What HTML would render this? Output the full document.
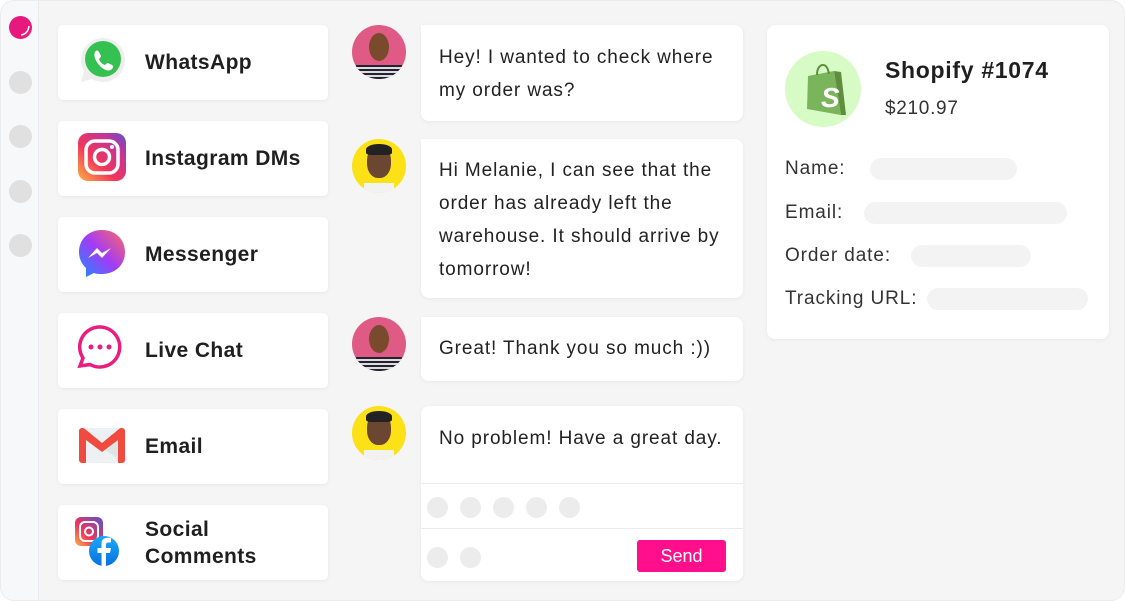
<!DOCTYPE html>
<html><head><style>
*{margin:0;padding:0;box-sizing:border-box}
body{width:1125px;height:601px;background:#fff;font-family:"Liberation Sans",sans-serif;color:#1f1f1f;position:relative;overflow:hidden}
.frame{position:absolute;left:0;top:0;width:1125px;height:601px;background:#f5f5f5;border-radius:14px;border:1px solid #ececec;overflow:hidden}
.side{position:absolute;left:0;top:0;width:38px;height:601px;background:#f7f8fa;border-right:1px solid #e6ebf0}
.dot{position:absolute;left:8px;width:23px;height:23px;border-radius:50%;background:#e0e0e0}
.card{position:absolute;left:57px;width:270px;height:75px;background:#fff;border-radius:5px;box-shadow:0 1px 4px rgba(0,0,0,.05)}
.card .lbl{position:absolute;left:87px;top:0;height:75px;display:flex;align-items:center;font-size:21px;font-weight:bold;line-height:27px;letter-spacing:0.4px}
.card svg{position:absolute}
.av{position:absolute;left:351px;width:54px;height:54px;border-radius:50%;overflow:hidden}
.b{position:absolute;left:420px;width:322px;background:#fff;border-radius:0 8px 8px 8px;box-shadow:0 1px 5px rgba(0,0,0,.06);font-size:19px;line-height:33px;padding:17px 10px 0 18px;color:#222;letter-spacing:0.9px}
.g{position:absolute;width:21px;height:21px;border-radius:50%;background:#ececec}
.right{position:absolute;left:766px;top:24px;width:342px;height:314px;background:#fff;border-radius:8px;box-shadow:0 1px 5px rgba(0,0,0,.06)}
.fl{position:absolute;left:18px;font-size:19px;color:#333;letter-spacing:0.9px}
.pill{position:absolute;height:22px;border-radius:11px;background:#f3f3f3}
</style></head><body><div class="frame">
<div class="side">
<div style="position:absolute;left:8px;top:15px;width:23px;height:23px;border-radius:50%;background:#e8197c"></div>
<svg style="position:absolute;left:8px;top:15px" width="23" height="23"><path d="M20 10 Q19 18 12 19" stroke="#fff" stroke-width="1.5" fill="none"/></svg>
<div class="dot" style="top:70px"></div><div class="dot" style="top:124px"></div><div class="dot" style="top:179px"></div><div class="dot" style="top:233px"></div>
</div>

<div class="card" style="top:24px"><svg style="left:20px;top:10px" width="50" height="50" viewBox="0 0 50 50"><path d="M25 3a22 22 0 0 1 0 44a22 22 0 0 1-11-3L3 47l3-11A22 22 0 0 1 25 3z" fill="#eee"/><circle cx="25" cy="24" r="18" fill="#35c152"/><path d="M17 17c1-2 3-2 4 0l2 4c0 1-1 2-2 3 1 3 3 5 6 6 1-1 2-2 3-2l4 2c2 1 1 3 0 4-3 3-8 1-12-3s-7-10-5-14z" fill="#fff"/></svg><div class="lbl">WhatsApp</div></div>

<div class="card" style="top:120px"><svg style="left:20px;top:12px" width="48" height="48" viewBox="0 0 48 48"><defs><linearGradient id="ig" x1="0" y1="1" x2="1" y2="0"><stop offset="0" stop-color="#fdb343"/><stop offset=".4" stop-color="#f1355b"/><stop offset=".75" stop-color="#c43596"/><stop offset="1" stop-color="#5a4fd0"/></linearGradient></defs><rect width="48" height="48" rx="10" fill="url(#ig)"/><rect x="8" y="8" width="32" height="32" rx="9" fill="none" stroke="#fff" stroke-width="3.5"/><circle cx="24" cy="24" r="7.5" fill="none" stroke="#fff" stroke-width="3.5"/><circle cx="34" cy="14" r="2" fill="#fff"/></svg><div class="lbl">Instagram DMs</div></div>

<div class="card" style="top:216px"><svg style="left:20px;top:12px" width="48" height="50" viewBox="0 0 48 50"><defs><linearGradient id="ms" x1="0" y1="1" x2="1" y2="0"><stop offset="0" stop-color="#1b8cff"/><stop offset=".5" stop-color="#a33bf5"/><stop offset="1" stop-color="#ff6c60"/></linearGradient></defs><path d="M24 1C11 1 1 10 1 23c0 7 3 12 7 16v9l8-4c2 1 5 1 8 1 13 0 23-9 23-22S37 1 24 1z" fill="url(#ms)"/><path d="M10 29l9-10 5 5 9-5-9 10-5-5z" fill="#fff"/></svg><div class="lbl">Messenger</div></div>

<div class="card" style="top:312px"><svg style="left:17px;top:10px" width="50" height="52" viewBox="0 0 50 52"><path d="M25 4a20 20 0 1 1-10 37.5L5 43l3-8A20 20 0 0 1 25 4z" fill="none" stroke="#ea1c7f" stroke-width="3.5"/><circle cx="16" cy="24" r="2.5" fill="#ea1c7f"/><circle cx="25" cy="24" r="2.5" fill="#ea1c7f"/><circle cx="34" cy="24" r="2.5" fill="#ea1c7f"/></svg><div class="lbl">Live Chat</div></div>

<div class="card" style="top:408px"><svg style="left:21px;top:19px" width="46" height="35" viewBox="0 0 46 35"><rect width="46" height="35" rx="3" fill="#eef1f3"/><path d="M23 20L46 35V5z" fill="#dfe4e7"/><path d="M0 3v29a3 3 0 0 0 3 3h4V12l16 12 16-12v23h4a3 3 0 0 0 3-3V3c0-3-4-4-6-2L23 15 6 1C4-1 0 0 0 3z" fill="#f14a3f"/></svg><div class="lbl">Email</div></div>

<div class="card" style="top:504px"><svg style="left:17px;top:12px" width="48" height="50" viewBox="0 0 48 50"><defs><linearGradient id="ig2" x1="0" y1="1" x2="1" y2="0"><stop offset="0" stop-color="#fdb343"/><stop offset=".4" stop-color="#f1355b"/><stop offset="1" stop-color="#5a4fd0"/></linearGradient><linearGradient id="fb" x1="0" y1="1" x2="0" y2="0"><stop offset="0" stop-color="#0a6fe0"/><stop offset="1" stop-color="#19aaf8"/></linearGradient></defs><rect x="0" y="0" width="28" height="29" rx="6" fill="url(#ig2)"/><rect x="5" y="5" width="18" height="19" rx="5" fill="none" stroke="#fff" stroke-width="2"/><circle cx="14" cy="14.5" r="4" fill="none" stroke="#fff" stroke-width="2"/><circle cx="29" cy="34" r="15" fill="url(#fb)"/><path d="M31 49V36h4l1-5h-5v-3c0-1.5.5-2.5 2.5-2.5H36v-4.5c-1 0-2-.2-3.5-.2-3.5 0-6 2-6 6V31h-4v5h4v13z" fill="#fff"/></svg><div class="lbl">Social<br>Comments</div></div>

<div class="av" style="top:24px;background:#e05a86"><div style="position:absolute;left:17px;top:8px;width:20px;height:28px;border-radius:50%;background:#7a4a2c"></div><div style="position:absolute;left:4px;top:40px;width:46px;height:14px;background:repeating-linear-gradient(180deg,#223 0 2px,#ddd 2px 4px)"></div></div>
<div class="av" style="top:138px;background:#fce117"><div style="position:absolute;left:15px;top:7px;width:24px;height:32px;border-radius:45%;background:#6b4630"></div><div style="position:absolute;left:14px;top:5px;width:26px;height:11px;border-radius:50% 50% 20% 20%;background:#222"></div><div style="position:absolute;left:12px;top:44px;width:30px;height:10px;background:#f2f2f2"></div></div>
<div class="av" style="top:316px;background:#e05a86"><div style="position:absolute;left:17px;top:8px;width:20px;height:28px;border-radius:50%;background:#7a4a2c"></div><div style="position:absolute;left:4px;top:40px;width:46px;height:14px;background:repeating-linear-gradient(180deg,#223 0 2px,#ddd 2px 4px)"></div></div>
<div class="av" style="top:405px;background:#fce117"><div style="position:absolute;left:15px;top:7px;width:24px;height:32px;border-radius:45%;background:#6b4630"></div><div style="position:absolute;left:14px;top:5px;width:26px;height:11px;border-radius:50% 50% 20% 20%;background:#222"></div><div style="position:absolute;left:12px;top:44px;width:30px;height:10px;background:#f2f2f2"></div></div>

<div class="b" style="top:24px;height:96px;padding-top:16px">Hey! I wanted to check where my order was?</div>
<div class="b" style="top:138px;height:159px;padding-top:15px">Hi Melanie, I can see that the order has already left the warehouse. It should arrive by tomorrow!</div>
<div class="b" style="top:316px;height:64px;padding-top:15px">Great! Thank you so much :))</div>
<div class="b" style="top:405px;height:175px;padding:0;border-radius:8px">
<div style="padding:16px 10px 0 18px">No problem! Have a great day.</div>
<div style="position:absolute;left:0;right:0;top:77px;border-top:1px solid #ebebeb"></div>
<div style="position:absolute;left:0;right:0;top:122px;border-top:1px solid #ebebeb"></div>
<div class="g" style="left:6px;top:91px"></div><div class="g" style="left:39px;top:91px"></div><div class="g" style="left:72px;top:91px"></div><div class="g" style="left:105px;top:91px"></div><div class="g" style="left:138px;top:91px"></div>
<div class="g" style="left:6px;top:141px"></div><div class="g" style="left:39px;top:141px"></div>
<div style="position:absolute;left:216px;top:134px;width:89px;height:32px;background:#ff0f8c;border-radius:3px;color:#fff;font-size:18px;text-align:center;line-height:32px;letter-spacing:0">Send</div>
</div>

<div class="right">
<svg style="position:absolute;left:18px;top:26px" width="76" height="76" viewBox="0 0 76 76"><circle cx="38" cy="38" r="38" fill="#d6fbc4"/><path d="M23 25l26-5 7 44-34-6z" fill="#7ab55c"/><path d="M49 20l7 1 5 43-5 0z" fill="#5e8e3e"/><path d="M32 24c0-7 3-10 6-10s5 3 6 9" fill="none" stroke="#5e8e3e" stroke-width="2"/><text x="36" y="56" font-family="Liberation Sans" font-weight="bold" font-style="italic" font-size="28" fill="#fff">S</text></svg>
<div style="position:absolute;left:118px;top:32px;font-size:23px;font-weight:bold;letter-spacing:0.7px">Shopify #1074</div>
<div style="position:absolute;left:118px;top:73px;font-size:19px;color:#333;letter-spacing:0.7px">$210.97</div>
<div class="fl" style="top:133px">Name:</div><div class="pill" style="left:103px;top:133px;width:147px"></div>
<div class="fl" style="top:177px">Email:</div><div class="pill" style="left:97px;top:177px;width:203px"></div>
<div class="fl" style="top:220px">Order date:</div><div class="pill" style="left:144px;top:220px;width:120px"></div>
<div class="fl" style="top:263px">Tracking URL:</div><div class="pill" style="left:160px;top:263px;width:161px"></div>
</div>
</div></body></html>
